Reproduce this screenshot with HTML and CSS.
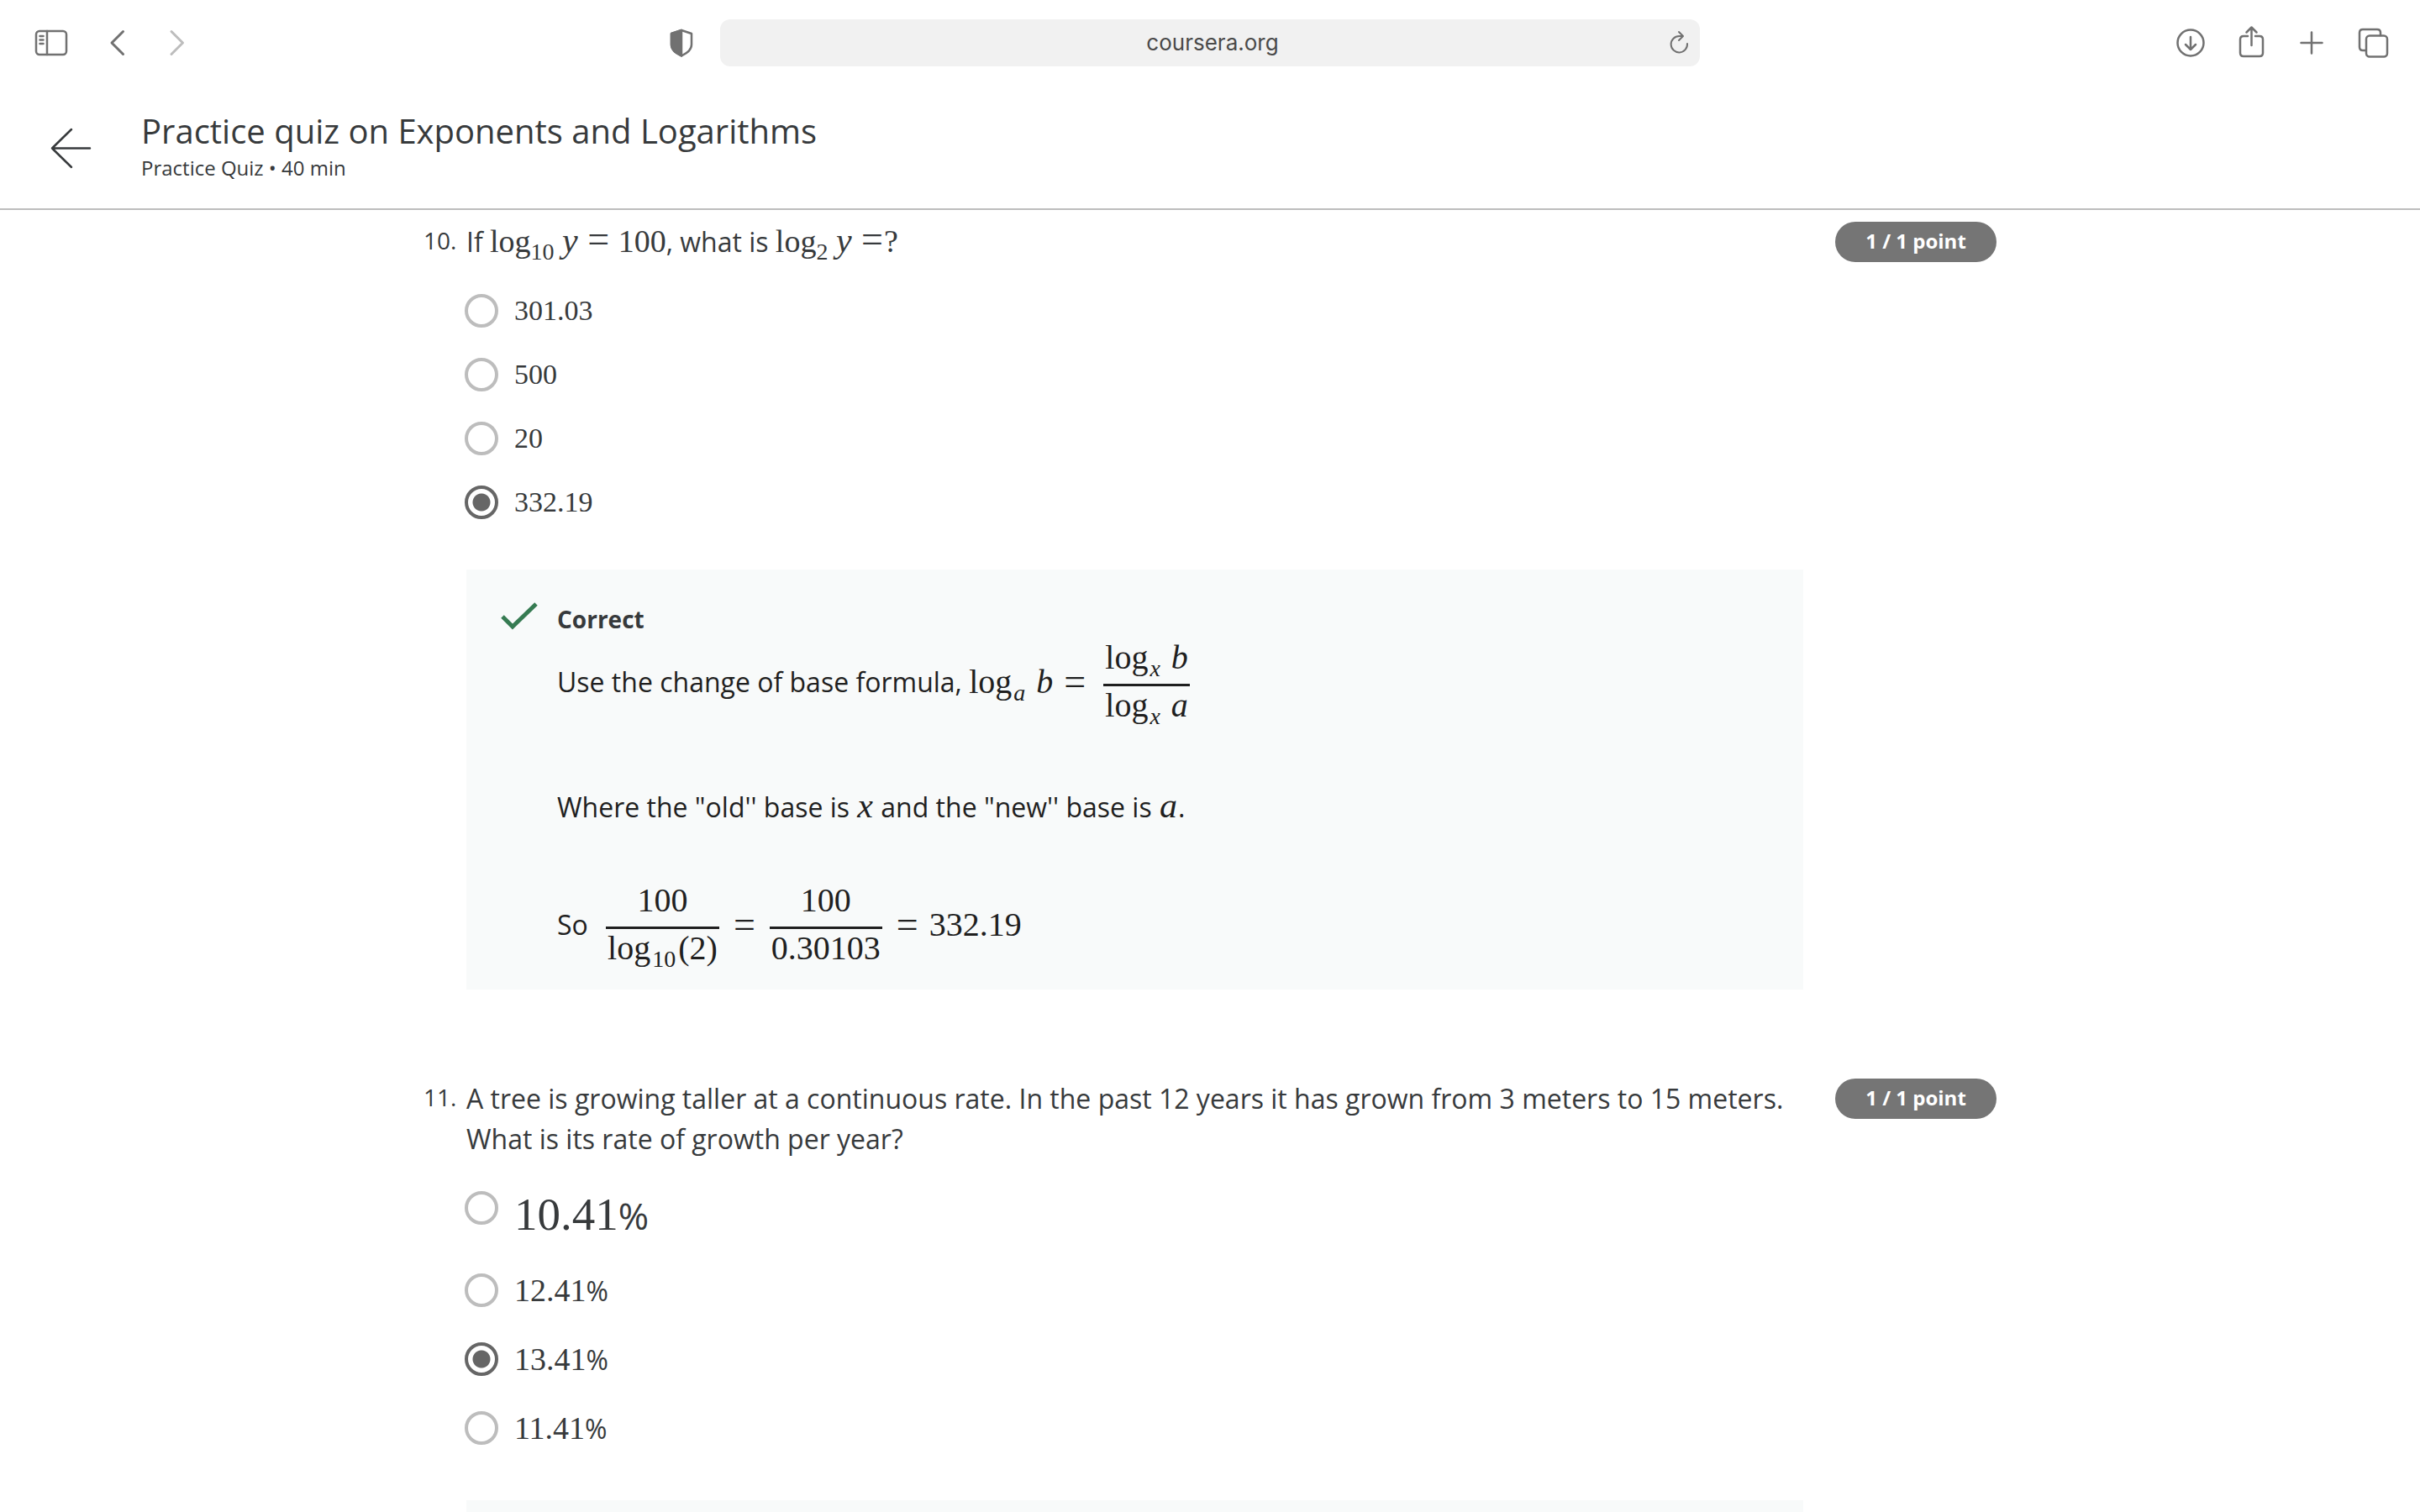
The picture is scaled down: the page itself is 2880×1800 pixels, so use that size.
FILE: index.html
```html
<!DOCTYPE html>
<html lang="en">
<head>
<meta charset="utf-8">
<title>Practice quiz on Exponents and Logarithms</title>
<link rel="stylesheet" href="styles.css">
</head>
<body>
<nav class="toolbar" aria-label="Browser">
  <div class="tools tools-left">
    <button class="tool" type="button" aria-label="Sidebar"><svg width="40" height="40" viewBox="0 0 40 40"><rect x="2" y="6" width="36" height="28" rx="4"/><path d="M15 6v28M6.500 12h4M6.500 16.500h4M6.500 21h4"/></svg></button>
    <button class="tool" type="button" aria-label="Back"><svg width="40" height="40" viewBox="0 0 40 40"><path class="bold" d="M29.500 6.500 16 20l13.500 13.500"/></svg></button>
    <button class="tool dim" type="button" aria-label="Forward"><svg width="40" height="40" viewBox="0 0 40 40"><path class="bold" d="M11 6.500 24.500 20 11 33.500"/></svg></button>
  </div>
  <div class="location">
    <button class="tool" type="button" aria-label="Privacy report"><svg width="40" height="40" viewBox="0 0 40 40"><path d="M20 5 32 9v13c0 6-4 9-12 13.500C12 31 8 28 8 22V9z"/><path class="solid" d="M20 5V35.500C12 31 8 28 8 22V9z"/></svg></button>
    <div class="address">
      <input class="url" type="text" value="coursera.org" aria-label="Address">
      <button class="tool reload" type="button" aria-label="Reload"><svg width="32" height="32" viewBox="0 0 32 32"><path d="M25 17A9.700 9.700 0 1 1 15.300 8H19M15 3l5 5-5 5"/></svg></button>
    </div>
  </div>
  <div class="tools tools-right">
    <button class="tool" type="button" aria-label="Downloads"><svg width="40" height="40" viewBox="0 0 40 40"><circle cx="19" cy="20" r="15.500"/><path d="M19 13v15M13 22l6 6 6-6"/></svg></button>
    <button class="tool" type="button" aria-label="Share"><svg width="40" height="40" viewBox="0 0 40 40"><path d="M15 12h-5q-4 0-4 4v16q0 4 4 4h19q4 0 4-4V16q0-4-4-4h-5M19.500 23V1.500M13.500 7.500l6-6 6 6"/></svg></button>
    <button class="tool" type="button" aria-label="New tab"><svg width="40" height="40" viewBox="0 0 40 40"><path d="M19 7.500v25M6.500 20h25"/></svg></button>
    <button class="tool" type="button" aria-label="Tabs"><svg width="40" height="40" viewBox="0 0 40 40"><rect x="12" y="11.500" width="25" height="25" rx="4"/><path d="M11 29H8q-4 0-4-4V8q0-4 4-4h17q4 0 4 4v3"/></svg></button>
  </div>
</nav>

<header class="quiz-header">
  <button class="back" type="button" aria-label="Back to course"><svg width="48" height="48" viewBox="0 0 48 48"><path d="M25 3 2 25.500 25 48M2 25.500h45"/></svg></button>
  <div>
    <h1 class="title">Practice quiz on Exponents and Logarithms</h1>
    <p class="subtitle">Practice Quiz • 40 min</p>
  </div>
</header>

<main class="quiz">
  <section class="question">
    <span class="number">10.</span>
    <div class="body">
      <p class="prompt">If <span class="math">log<sub>10</sub> <i>y</i> <span class="rel">=</span> 100</span>, what is <span class="math">log<sub>2</sub> <i>y</i> <span class="rel">=</span>?</span></p>
      <div class="options">
        <label class="option"><input type="radio" name="q10"><span class="math">301.03</span></label>
        <label class="option"><input type="radio" name="q10"><span class="math">500</span></label>
        <label class="option"><input type="radio" name="q10"><span class="math">20</span></label>
        <label class="option"><input type="radio" name="q10" checked><span class="math">332.19</span></label>
      </div>
      <div class="feedback">
        <svg class="check" width="44" height="34" viewBox="0 0 44 34"><path d="M1 16l12 12L41 1"/></svg>
        <div class="explanation">
          <h2 class="verdict">Correct</h2>
          <p class="line">Use the change of base formula, <span class="formula"><span class="term">log<sub>a</sub> <i>b</i></span><span class="term eq">=</span><span class="frac"><span>log<sub>x</sub> <i>b</i></span><span>log<sub>x</sub> <i>a</i></span></span></span></p>
          <p class="line plain">Where the "old'' base is <i class="math">x</i> and the "new'' base is <i class="math">a</i>.</p>
          <p class="line">So <span class="formula"><span class="frac"><span>100</span><span>log<sub class="upright">10</sub>(2)</span></span><span class="term eq">=</span><span class="frac"><span>100</span><span>0.30103</span></span><span class="term eq">=</span><span class="term">332.19</span></span></p>
        </div>
      </div>
    </div>
    <span class="points">1 / 1 point</span>
  </section>

  <section class="question">
    <span class="number">11.</span>
    <div class="body">
      <p class="prompt">A tree is growing taller at a continuous rate. In the past 12 years it has grown from 3 meters to 15 meters. What is its rate of growth per year?</p>
      <div class="options roomy">
        <label class="option large"><input type="radio" name="q11"><span><span class="math">10.41</span>%</span></label>
        <label class="option"><input type="radio" name="q11"><span><span class="math">12.41</span>%</span></label>
        <label class="option"><input type="radio" name="q11" checked><span><span class="math">13.41</span>%</span></label>
        <label class="option"><input type="radio" name="q11"><span><span class="math">11.41</span>%</span></label>
      </div>
      <div class="feedback"></div>
    </div>
    <span class="points">1 / 1 point</span>
  </section>
</main>
</body>
</html>
```

FILE: styles.css
```css
* { box-sizing: border-box; }

body {
  margin: 0;
  height: 100vh;
  overflow: hidden;
  display: flex;
  flex-direction: column;
  background: #fff;
  color: #373a3c;
  font-family: "Open Sans", sans-serif;
}

h1, h2, p { margin: 0; font-weight: 400; }

button {
  padding: 0;
  border: 0;
  background: none;
}

svg {
  display: block;
  overflow: visible;
  fill: none;
  stroke: currentColor;
  stroke-width: 2.5;
  stroke-linecap: round;
  stroke-linejoin: round;
}

.bold { stroke-width: 3; }
.solid { fill: currentColor; }

/* Browser toolbar */
.toolbar {
  flex: none;
  display: grid;
  grid-template-columns: 1fr 1302px 1fr;
  align-items: center;
  height: 102px;
  padding: 0 36px 0 40px;
}

.tool { color: #717171; }
.dim { color: #bdbdbd; }

.tools { display: flex; }
.tools-left { gap: 36px; padding-left: 1px; }
.tools-right { gap: 32px; justify-content: flex-end; }

.location {
  display: flex;
  align-items: center;
  gap: 26px;
  padding-right: 70px;
}

.address {
  flex: 1;
  display: flex;
  align-items: center;
  height: 56px;
  padding: 0 8px 0 46px;
  border-radius: 12px;
  background: #f1f1f1;
}

.url {
  flex: 1;
  padding: 0;
  border: 0;
  background: none;
  color: #4a4a4a;
  font: 26px/30px Inter, sans-serif;
  text-align: center;
}

.reload svg { stroke-width: 2; }

/* Quiz header */
.quiz-header {
  flex: none;
  display: flex;
  align-items: center;
  gap: 60px;
  height: 148px;
  padding: 0 60px;
  border-bottom: 2px solid #bdbdbd;
}

.back { color: #373a3c; }

.title {
  font-size: 40px;
  line-height: 48px;
}

.subtitle {
  margin-top: 2px;
  font-size: 24px;
  line-height: 36px;
}

/* Questions */
.quiz {
  flex: 1;
  min-height: 0;
  overflow: hidden;
  width: 1872px;
  margin: 0 auto;
  padding-top: 14px;
}

.question {
  display: grid;
  grid-template-columns: 51px 1fr 192px;
  align-items: start;
  margin-bottom: 106px;
}

.number {
  font-size: 28px;
  line-height: 44px;
}

.body { padding-right: 38px; }

.prompt {
  font-size: 32px;
  line-height: 48px;
}

.math {
  font-family: "Liberation Serif", serif;
  font-size: 38px;
  line-height: 1;
}

.prompt i {
  font-size: 42px;
  line-height: 0;
}

.rel {
  margin: 0 1px 0 2px;
  font-size: 46px;
  line-height: 0;
}

sub {
  margin: 0 3px 0 2px;
  font-size: 28px;
  line-height: 0;
}

.prompt sub { margin: 0; }

.options {
  display: grid;
  gap: 36px;
  margin-left: -2px;
  padding-top: 38px;
}

.option {
  display: flex;
  align-items: center;
  gap: 19px;
  height: 40px;
  font-size: 32px;
}

.option .math { font-size: 34px; }

.option input {
  appearance: none;
  flex: none;
  width: 40px;
  height: 40px;
  margin: 0;
  border: 4px solid #bdbdbd;
  border-radius: 50%;
}

.option input:checked {
  border-color: #666;
  background: radial-gradient(circle, #666 10px, transparent 11px);
}

.roomy {
  gap: 42px;
  padding-bottom: 6px;
}

.roomy .math { font-size: 38px; }

.large {
  align-items: flex-start;
  height: 56px;
  font-size: 44px;
  line-height: 58px;
}

.roomy .large .math { font-size: 55px; }

.points {
  height: 48px;
  border-radius: 24px;
  background: #757575;
  color: #fff;
  font-size: 24px;
  font-weight: 700;
  line-height: 46px;
  text-align: center;
}

/* Feedback */
.feedback {
  display: flex;
  gap: 22px;
  margin-top: 60px;
  padding: 40px 42px 18px;
  background: #f8fafa;
  color: #1f1f1f;
}

.check {
  color: #367b52;
  stroke-width: 5;
  stroke-linecap: butt;
  stroke-linejoin: miter;
}

.verdict {
  margin-bottom: 4px;
  color: #373a3c;
  font-size: 28px;
  font-weight: 700;
  line-height: 38px;
}

.line {
  font-size: 32px;
  line-height: 48px;
}

.plain { padding: 66px 0 64px; }

.plain .math {
  padding: 0 1px;
  font-size: 42px;
  line-height: 0;
}

.formula {
  display: inline-flex;
  align-items: center;
  gap: 13px;
  vertical-align: middle;
  font-family: "Liberation Serif", serif;
  font-size: 40px;
}

.formula sub { font-style: italic; }
.formula .upright { font-style: normal; }

.term { padding-bottom: 8px; }
.eq { font-size: 46px; }

.frac {
  display: grid;
  margin: 0 4px;
  text-align: center;
}

.frac:first-child { margin-left: 13px; }
.frac:last-child { margin-left: 8px; }

.frac > span {
  padding: 0 2px 8px;
  line-height: 46px;
}

.frac > span + span { border-top: 3px solid #1f1f1f; }
```
